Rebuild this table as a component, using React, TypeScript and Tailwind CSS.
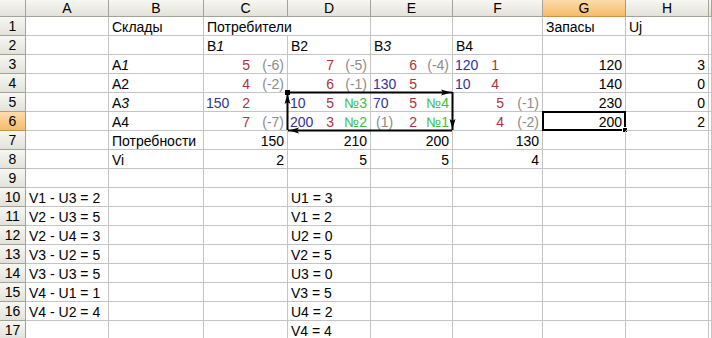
import type { ReactNode } from "react";

const blue = "text-[#333399]";
const red = "text-[#b0323c]";
const gray = "text-[#8c8c8c]";
const green = "text-[#3cc03c]";

type Tri = { b?: ReactNode; r?: ReactNode; g?: ReactNode; gc?: string; w?: string };

// ячейка вида: синее число | красная стоимость | серая оценка / зелёный номер
const TriCell = ({ b, r, g, gc = gray, w = "w-[46px]" }: Tri) => (
  <div className="flex w-full items-end">
    <div className={`flex ${w} justify-between pl-[2px]`}>
      <span className={blue}>{b}</span>
      <span className={red}>{r}</span>
    </div>
    <div className={`flex-1 pr-[3px] text-right ${gc}`}>{g}</div>
  </div>
);

const R = ({ children }: { children: ReactNode }) => (
  <div className="w-full pr-[3px] text-right">{children}</div>
);
const L = ({ children }: { children: ReactNode }) => <div className="pl-[3px]">{children}</div>;

const COLS = ["A", "B", "C", "D", "E", "F", "G", "H", ""];

// строки: содержимое колонок A..I
const rows: ReactNode[][] = [
  [null, <L>Склады</L>, <L>Потребители</L>, null, null, null, <L>Запасы</L>, <L>Uj</L>, null],
  [
    null,
    null,
    <L>
      B<i>1</i>
    </L>,
    <L>B2</L>,
    <L>
      B<i>3</i>
    </L>,
    <L>B4</L>,
    null,
    null,
    null,
  ],
  [
    null,
    <L>
      A<i>1</i>
    </L>,
    <TriCell r="5" g="(-6)" />,
    <TriCell r="7" g="(-5)" />,
    <TriCell r="6" g="(-4)" />,
    <TriCell b="120" r="1" />,
    <R>120</R>,
    <R>3</R>,
    null,
  ],
  [
    null,
    <L>A2</L>,
    <TriCell r="4" g="(-2)" />,
    <TriCell r="6" g="(-1)" />,
    <TriCell b="130" r="5" />,
    <TriCell b="10" r="4" />,
    <R>140</R>,
    <R>0</R>,
    null,
  ],
  [
    null,
    <L>
      A<i>3</i>
    </L>,
    <TriCell b="150" r="2" />,
    <TriCell b="10" r="5" g="№3" gc={green} />,
    <TriCell b="70" r="5" g="№4" gc={green} />,
    <TriCell r="5" g="(-1)" w="w-[51px]" />,
    <R>230</R>,
    <R>0</R>,
    null,
  ],
  [
    null,
    <L>A4</L>,
    <TriCell r="7" g="(-7)" />,
    <TriCell b="200" r="3" g="№2" gc={green} />,
    <TriCell b={<span className={`${gray} pl-[3px]`}>(1)</span>} r="2" g="№1" gc={green} />,
    <TriCell r="4" g="(-2)" w="w-[51px]" />,
    <R>200</R>,
    <R>2</R>,
    null,
  ],
  [null, <L>Потребности</L>, <R>150</R>, <R>210</R>, <R>200</R>, <R>130</R>, null, null, null],
  [null, <L>Vi</L>, <R>2</R>, <R>5</R>, <R>5</R>, <R>4</R>, null, null, null],
  [null, null, null, null, null, null, null, null, null],
];

const leftEq = ["V1 - U3 = 2", "V2 - U3 = 5", "V2 - U4 = 3", "V3 - U2 = 5", "V3 - U3 = 5", "V4 - U1 = 1", "V4 - U2 = 4", ""];
const rightEq = ["U1 = 3", "V1 = 2", "U2 = 0", "V2 = 5", "U3 = 0", "V3 = 5", "U4 = 2", "V4 = 4"];
leftEq.forEach((eq, i) => {
  rows.push([eq ? <L>{eq}</L> : null, null, null, <L>{rightEq[i]}</L>, null, null, null, null, null]);
});

const headerCls =
  "flex items-center justify-center border-r border-b border-[#a3a39a] bg-linear-to-b from-[#f7f7f3] to-[#e3e2da]";
const activeCls =
  "flex items-center justify-center border-r border-b border-[#c9914a] bg-linear-to-b from-[#fcdcaa] to-[#f6bb69]";

export default function App() {
  return (
    <div className="relative h-[338px] w-[712px] overflow-hidden bg-white font-['Liberation_Sans',Arial,sans-serif] text-[14px] text-black">
      <div className="grid grid-cols-[26px_83px_95px_84px_83px_82px_90px_83px_83px_1fr] grid-rows-[17px_repeat(17,19px)]">
        {/* заголовки колонок */}
        <div className={headerCls} />
        {COLS.map((c, i) => (
          <div key={c + i} className={c === "G" ? activeCls : headerCls}>
            {c}
          </div>
        ))}

        {rows.map((row, ri) => (
          <div key={ri} className="contents">
            <div className={ri === 5 ? activeCls : headerCls}>{ri + 1}</div>
            {row.map((cell, ci) => {
              const noRight = ri === 0 && ci === 2;
              const selected = ri === 5 && ci === 6;
              return (
                <div
                  key={ci}
                  className={`relative flex items-end whitespace-nowrap border-b border-[#c4c4c4] leading-[16px] ${
                    noRight ? "z-10" : "border-r"
                  }`}
                >
                  {cell}
                  {selected && (
                    <div className="absolute -top-[1px] -left-[1px] -right-[1px] -bottom-[1px] border-2 border-black">
                      <div className="absolute -right-[4px] -bottom-[4px] h-[6px] w-[6px] border border-white bg-black" />
                    </div>
                  )}
                </div>
              );
            })}
          </div>
        ))}
      </div>

      {/* цикл пересчёта */}
      <svg className="pointer-events-none absolute left-0 top-0" width="712" height="338">
        <g stroke="#000" strokeWidth="2" fill="none">
          <line x1="287" y1="92.5" x2="452" y2="92.5" />
          <line x1="452.5" y1="92" x2="452.5" y2="130" />
          <line x1="452" y1="130.5" x2="288" y2="130.5" />
          <line x1="287.5" y1="130" x2="287.5" y2="93" />
        </g>
        <g fill="#000">
          <polygon points="451,92.5 441,89.5 443,92.5 441,95.5" />
          <polygon points="452.5,129 449.5,119 452.5,121 455.5,119" />
          <polygon points="289,130.5 299,127.5 297,130.5 299,133.5" />
          <polygon points="287.5,94 284.5,104 287.5,102 290.5,104" />
          <rect x="285" y="90" width="5" height="5" />
        </g>
      </svg>
    </div>
  );
}
